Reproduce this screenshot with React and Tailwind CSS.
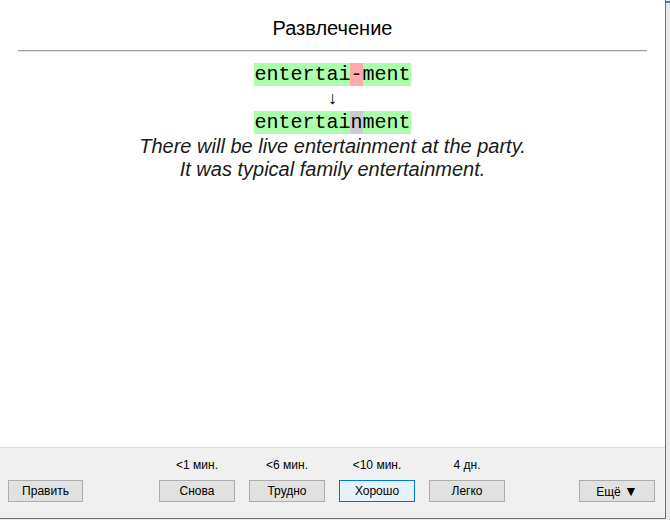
// App.jsx — Anki-style review screen
const times = [
    { label: '<1 мин.', text: 'Снова' },
    { label: '<6 мин.', text: 'Трудно' },
    { label: '<10 мин.', text: 'Хорошо', focused: true },
    { label: '4 дн.', text: 'Легко' },
];

const Button = ({ children, focused, className = '' }) => (
    <button
        className={
            'h-[22px] text-[12px] leading-none text-black border ' +
            (focused ? 'border-[#0078d7] bg-[#e5f1fb] ' : 'border-[#adadad] bg-[#e1e1e1] ') +
            className
        }
    >
        {children}
    </button>
);

const App = () => {
    return (
        <div className="w-[670px] h-[520px] flex bg-[#e8e8e8]" style={{ fontFamily: '"Liberation Sans", Arial, sans-serif' }}>
            <div className="w-[666px] h-[519px] flex flex-col bg-white border-r border-b border-[#707070]">
                <div className="flex-1 flex flex-col">
                    <h1 className="pt-[16px] text-[20px] leading-[24px] text-center text-black">Развлечение</h1>
                    <div className="mx-[18px] mt-[10px] border-t border-b border-t-[#a0a0a0] border-b-[#e3e3e3]" />

                    <div className="mt-[11px] flex flex-col items-center text-[20px] leading-[23px] text-black" style={{ fontFamily: '"Liberation Mono", "Courier New", monospace' }}>
                        <div className="bg-[#aaffaa]">
                            entertai<span className="bg-[#ffaaaa]">-</span>ment
                        </div>
                        <div className="h-[25px] leading-[25px] text-[18px]" style={{ fontFamily: '"Liberation Sans", Arial, sans-serif' }}>↓</div>
                        <div className="bg-[#aaffaa]">
                            entertai<span className="bg-[#cccccc]">n</span>ment
                        </div>
                    </div>

                    <div className="mt-[1px] flex flex-col items-center italic text-[20px] leading-[23px] text-[#1a1a1a]">
                        <div>There will be live entertainment at the party.</div>
                        <div>It was typical family entertainment.</div>
                    </div>
                </div>

                <div className="h-[71px] border-t border-[#dcdcdc] bg-[#f0f0f0] grid grid-cols-[1fr_auto_1fr] items-end px-[8px] pt-[10px] pb-[16px]">
                    <div>
                        <Button className="w-[75px]">Править</Button>
                    </div>
                    <div className="flex gap-[14px] -ml-[1px]">
                        {times.map((t) => (
                            <div key={t.text} className="flex flex-col items-center w-[76px]">
                                <div className="h-[14px] leading-[14px] text-[12px] text-black mb-[8px]">{t.label}</div>
                                <Button focused={t.focused} className="w-[76px]">{t.text}</Button>
                            </div>
                        ))}
                    </div>
                    <div className="flex justify-end pr-[2px]">
                        <Button className="w-[76px]">Ещё <span className="text-[14px]">▼</span></Button>
                    </div>
                </div>
            </div>
            <div className="flex-1 flex flex-col">
                <div className="mt-[1px] h-[2px] bg-[#4a7fb5]" />
            </div>
        </div>
    );
};

export default App;
